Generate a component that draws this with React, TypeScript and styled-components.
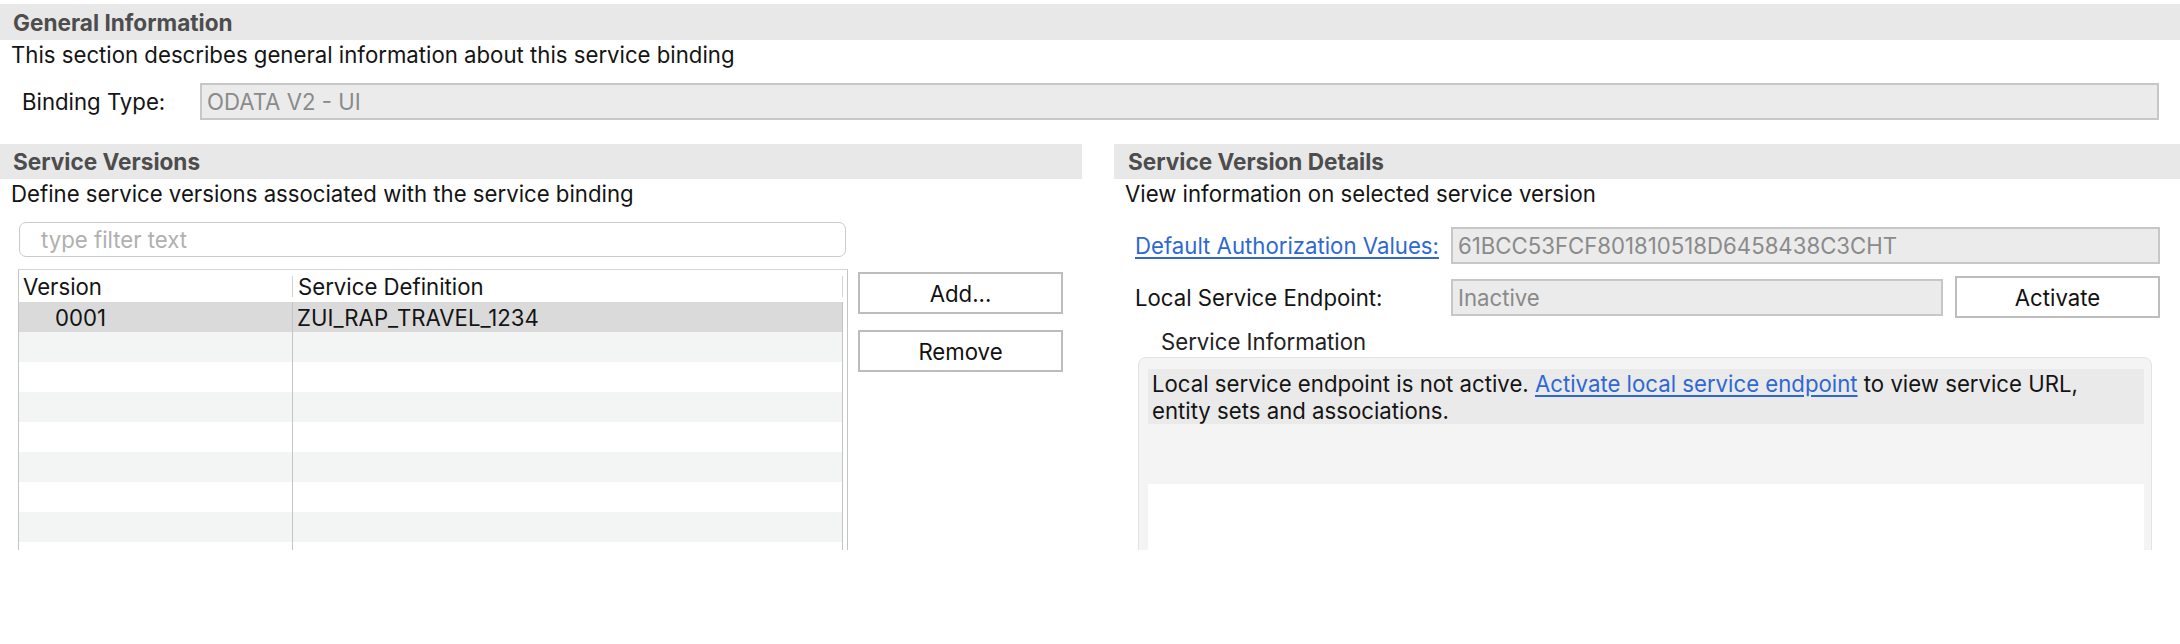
import React from "react";
import styled, { createGlobalStyle } from "styled-components";

const GlobalStyle = createGlobalStyle`
  html, body { margin: 0; padding: 0; background: #ffffff; }
  body {
    font-family: Inter, "Liberation Sans", Arial, sans-serif;
    font-size: 22.2px;
    color: #141414;
  }
  * { box-sizing: border-box; }
`;

const Page = styled.div`
  width: 2180px;
  height: 644px;
  overflow: hidden;
  padding-top: 4px;
  background: #fff;
`;

const SectionHeader = styled.div<{ $h: number; $indent: number }>`
  height: ${(p) => p.$h}px;
  background: #e8e8e8;
  display: flex;
  align-items: center;
  padding-left: ${(p) => p.$indent}px;
  font-weight: 700;
  font-size: 22.6px;
  color: #4d4d4d;
`;

const Description = styled.div`
  line-height: 28px;
  margin-top: 1px;
  padding-left: 11px;
  white-space: nowrap;
`;

const BindingRow = styled.div`
  margin-top: 14px;
  display: grid;
  grid-template-columns: 178px 1fr;
  align-items: center;
  padding: 0 21px 0 22px;
`;

const Label = styled.span`
  white-space: nowrap;
`;

const Field = styled.div<{ $h?: number }>`
  height: ${(p) => p.$h ?? 37}px;
  border: 2px solid #c7c7c7;
  background: #ebebeb;
  color: #8a8a8a;
  padding-left: 5px;
  display: flex;
  align-items: center;
  white-space: nowrap;
  overflow: hidden;
`;

const Columns = styled.div`
  margin-top: 24px;
  display: grid;
  grid-template-columns: 1082px 1066px;
  column-gap: 32px;
  height: 406px;
  overflow: hidden;
`;

const Column = styled.div`
  display: flex;
  flex-direction: column;
  min-width: 0;
`;

const Filter = styled.div`
  margin: 14px 0 0 19px;
  width: 827px;
  height: 35px;
  border: 1px solid #cbcbcb;
  border-radius: 7px;
  padding-left: 21px;
  display: flex;
  align-items: center;
  color: #b0b0b0;
`;

const TableArea = styled.div`
  margin-top: 12px;
  padding-left: 18px;
  display: flex;
  align-items: flex-start;
  gap: 10px;
`;

const Table = styled.div`
  width: 830px;
  border: 1px solid #c4c4c4;
  border-top-color: #d4d4d4;
  border-bottom: none;
  display: flex;
`;

const Grid = styled.div`
  display: grid;
  grid-template-columns: 274px 550px;
`;

const Gutter = styled.div`
  width: 4px;
`;

const HeadCell = styled.div<{ $pad: number }>`
  height: 32px;
  display: flex;
  align-items: center;
  padding-left: ${(p) => p.$pad}px;
  white-space: nowrap;
`;

const HeadSep = styled.span`
  margin-left: auto;
  width: 1px;
  height: 21px;
  background: #d2d2d2;
`;

const Cell = styled.div<{ $bg: string; $pad: number }>`
  height: 30px;
  background: ${(p) => p.$bg};
  border-right: 1px solid #c4c4c4;
  padding-left: ${(p) => p.$pad}px;
  display: flex;
  align-items: center;
  white-space: nowrap;
`;

const ButtonStack = styled.div`
  margin-top: 3px;
  display: flex;
  flex-direction: column;
  gap: 16px;
`;

const Button = styled.button`
  width: 205px;
  height: 42px;
  background: #fff;
  border: 2px solid #bdbdbd;
  border-radius: 0;
  font-family: inherit;
  font-size: 22.2px;
  color: #111;
  padding: 0;
`;

const FormGrid = styled.div`
  margin-top: 19px;
  padding: 0 20px 0 21px;
  display: grid;
  grid-template-columns: 316px 1fr;
  row-gap: 12px;
  align-items: center;
`;

const LinkLabel = styled.a`
  color: #2f68d2;
  text-decoration: underline;
  text-underline-offset: 3px;
  white-space: nowrap;
  cursor: pointer;
`;

const EndpointRow = styled.div`
  display: flex;
  align-items: center;
  gap: 12px;
`;

const Grow = styled.div`
  flex: 1;
  min-width: 0;
`;

const SubLabel = styled.div`
  margin-top: 10px;
  padding-left: 47px;
  line-height: 28px;
  color: #222;
`;

const GroupBox = styled.div`
  margin: 1px 0 0 24px;
  width: 1014px;
  height: 260px;
  background: #f4f4f4;
  border: 1px solid #e3e3e3;
  border-radius: 8px;
  padding: 11px 7px 0 9px;
`;

const InfoText = styled.div`
  background: #eaeaea;
  height: 55px;
  padding: 1px 4px 0;
  line-height: 27px;
  white-space: nowrap;
`;

const InlineLink = styled.a`
  color: #2f68d2;
  text-decoration: underline;
  text-underline-offset: 3px;
  cursor: pointer;
`;

const Spacer = styled.div`
  height: 60px;
`;

const WhiteArea = styled.div`
  background: #fff;
  height: 200px;
`;

const rows = [
  { version: "0001", def: "ZUI_RAP_TRAVEL_1234", selected: true },
  ...Array.from({ length: 8 }, () => ({ version: "", def: "", selected: false })),
];

export default function App() {
  return (
    <>
      <GlobalStyle />
      <Page>
        <SectionHeader $h={36} $indent={13}>General Information</SectionHeader>
        <Description>This section describes general information about this service binding</Description>
        <BindingRow>
          <Label>Binding Type:</Label>
          <Field>ODATA V2 - UI</Field>
        </BindingRow>

        <Columns>
          <Column>
            <SectionHeader $h={35} $indent={13}>Service Versions</SectionHeader>
            <Description>Define service versions associated with the service binding</Description>
            <Filter>type filter text</Filter>
            <TableArea>
              <Table>
                <Grid>
                  <HeadCell $pad={4}>
                    Version
                    <HeadSep />
                  </HeadCell>
                  <HeadCell $pad={5}>
                    Service Definition
                    <HeadSep />
                  </HeadCell>
                  {rows.map((r, i) => {
                    const bg = r.selected ? "#dadada" : i % 2 === 1 ? "#f3f4f4" : "#ffffff";
                    return (
                      <React.Fragment key={i}>
                        <Cell $bg={bg} $pad={36}>{r.version}</Cell>
                        <Cell $bg={bg} $pad={4}>{r.def}</Cell>
                      </React.Fragment>
                    );
                  })}
                </Grid>
                <Gutter />
              </Table>
              <ButtonStack>
                <Button>Add...</Button>
                <Button>Remove</Button>
              </ButtonStack>
            </TableArea>
          </Column>

          <Column>
            <SectionHeader $h={35} $indent={14}>Service Version Details</SectionHeader>
            <Description>View information on selected service version</Description>
            <FormGrid>
              <LinkLabel>Default Authorization Values:</LinkLabel>
              <Field>61BCC53FCF801810518D6458438C3CHT</Field>
              <Label>Local Service Endpoint:</Label>
              <EndpointRow>
                <Grow>
                  <Field>Inactive</Field>
                </Grow>
                <Button>Activate</Button>
              </EndpointRow>
            </FormGrid>
            <SubLabel>Service Information</SubLabel>
            <GroupBox>
              <InfoText>
                Local service endpoint is not active. <InlineLink>Activate local service endpoint</InlineLink> to view service URL,
                <br />
                entity sets and associations.
              </InfoText>
              <Spacer />
              <WhiteArea />
            </GroupBox>
          </Column>
        </Columns>
      </Page>
    </>
  );
}
